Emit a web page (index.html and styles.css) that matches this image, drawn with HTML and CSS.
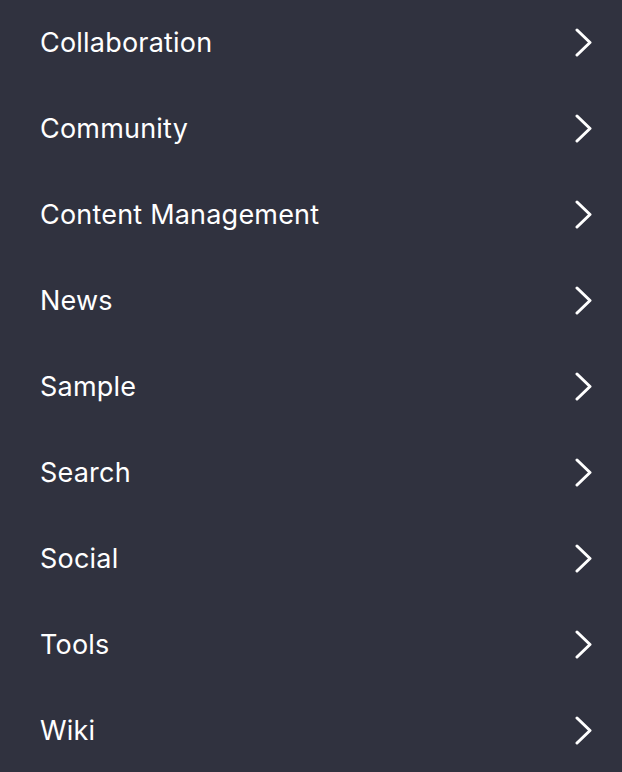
FILE: index.html
```html
<!DOCTYPE html>
<html>
<head>
<meta charset="utf-8">
<link rel="stylesheet" href="styles.css">
</head>
<body>
<ul class="menu">
  <li class="item"><span class="label">Collaboration</span><svg class="chev" viewBox="0 0 18 29"><path d="M2 2 L15 14.5 L2 27"/></svg></li>
  <li class="item"><span class="label">Community</span><svg class="chev" viewBox="0 0 18 29"><path d="M2 2 L15 14.5 L2 27"/></svg></li>
  <li class="item"><span class="label">Content Management</span><svg class="chev" viewBox="0 0 18 29"><path d="M2 2 L15 14.5 L2 27"/></svg></li>
  <li class="item"><span class="label">News</span><svg class="chev" viewBox="0 0 18 29"><path d="M2 2 L15 14.5 L2 27"/></svg></li>
  <li class="item"><span class="label">Sample</span><svg class="chev" viewBox="0 0 18 29"><path d="M2 2 L15 14.5 L2 27"/></svg></li>
  <li class="item"><span class="label">Search</span><svg class="chev" viewBox="0 0 18 29"><path d="M2 2 L15 14.5 L2 27"/></svg></li>
  <li class="item"><span class="label">Social</span><svg class="chev" viewBox="0 0 18 29"><path d="M2 2 L15 14.5 L2 27"/></svg></li>
  <li class="item"><span class="label">Tools</span><svg class="chev" viewBox="0 0 18 29"><path d="M2 2 L15 14.5 L2 27"/></svg></li>
  <li class="item"><span class="label">Wiki</span><svg class="chev" viewBox="0 0 18 29"><path d="M2 2 L15 14.5 L2 27"/></svg></li>
</ul>
</body>
</html>
```
FILE: styles.css
```css
html, body {
  margin: 0;
  padding: 0;
  background: #30323f;
  height: 100%;
  overflow: hidden;
}
.menu {
  list-style: none;
  margin: -1px 0 0 0;
  padding: 0;
  font-family: Inter, "Noto Sans", sans-serif;
}
.item {
  height: 86px;
  display: flex;
  align-items: center;
  justify-content: space-between;
  padding: 0 29px 0 40px;
}
.label {
  color: #ffffff;
  font-size: 27px;
  font-weight: 400;
  letter-spacing: 0.2px;
}
.chev {
  width: 18px;
  height: 29px;
  fill: none;
  stroke: #ffffff;
  stroke-width: 3;
  stroke-linecap: round;
  stroke-linejoin: round;
}
```
